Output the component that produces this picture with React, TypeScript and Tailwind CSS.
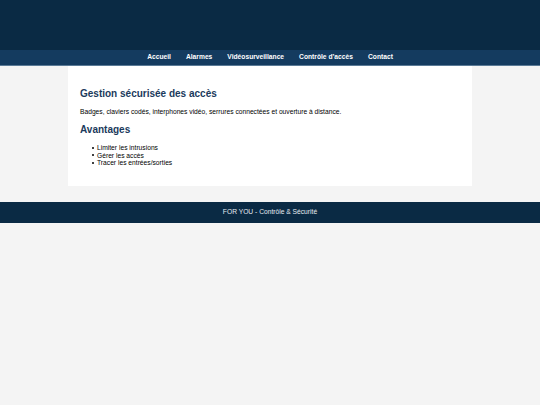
export default function App() {
    const links = ['Accueil', 'Alarmes', 'Vidéosurveillance', 'Contrôle d’accès', 'Contact'];
    const avantages = ['Limiter les intrusions', 'Gérer les accès', 'Tracer les entrées/sorties'];

    return (
        <div className="min-h-[405px] bg-[#f4f4f4] font-['Liberation_Sans',Arial,sans-serif] text-black">
            {/* Header */}
            <header className="h-[50px] bg-[#0a2a44]"></header>

            {/* Navigation */}
            <nav className="flex h-[16px] items-center justify-center gap-[15px] border-b border-[#5a7a96] bg-[#143b5f]">
                {links.map((link) => (
                    <a key={link} href="#" className="text-[6.7px] font-bold leading-none text-white">
                        {link}
                    </a>
                ))}
            </nav>

            {/* Content */}
            <main className="mx-auto w-[404px] bg-white px-[12px] pb-[19px] pt-[22px]">
                <h2 className="text-[10px] font-bold leading-[12px] text-[#1b3a5c]">Gestion sécurisée des accès</h2>
                <p className="mt-[7px] text-[6.7px] leading-[9px]">
                    Badges, claviers codés, interphones vidéo, serrures connectées et ouverture à distance.
                </p>
                <h3 className="mt-[8px] text-[10px] font-bold leading-[12px] text-[#1b3a5c]">Avantages</h3>
                <ul className="mt-[8px] pl-[12px] text-[6.7px] leading-[7.5px]">
                    {avantages.map((item) => (
                        <li key={item} className="flex items-center gap-[3px]">
                            <span className="h-[2px] w-[2px] rounded-full bg-black"></span>
                            <span>{item}</span>
                        </li>
                    ))}
                </ul>
            </main>

            {/* Footer */}
            <footer className="mt-[16px] flex h-[21px] items-center justify-center bg-[#0a2a44]">
                <p className="text-[6.7px] text-[#e6ebf0]">FOR YOU - Contrôle &amp; Sécurité</p>
            </footer>
        </div>
    );
}
